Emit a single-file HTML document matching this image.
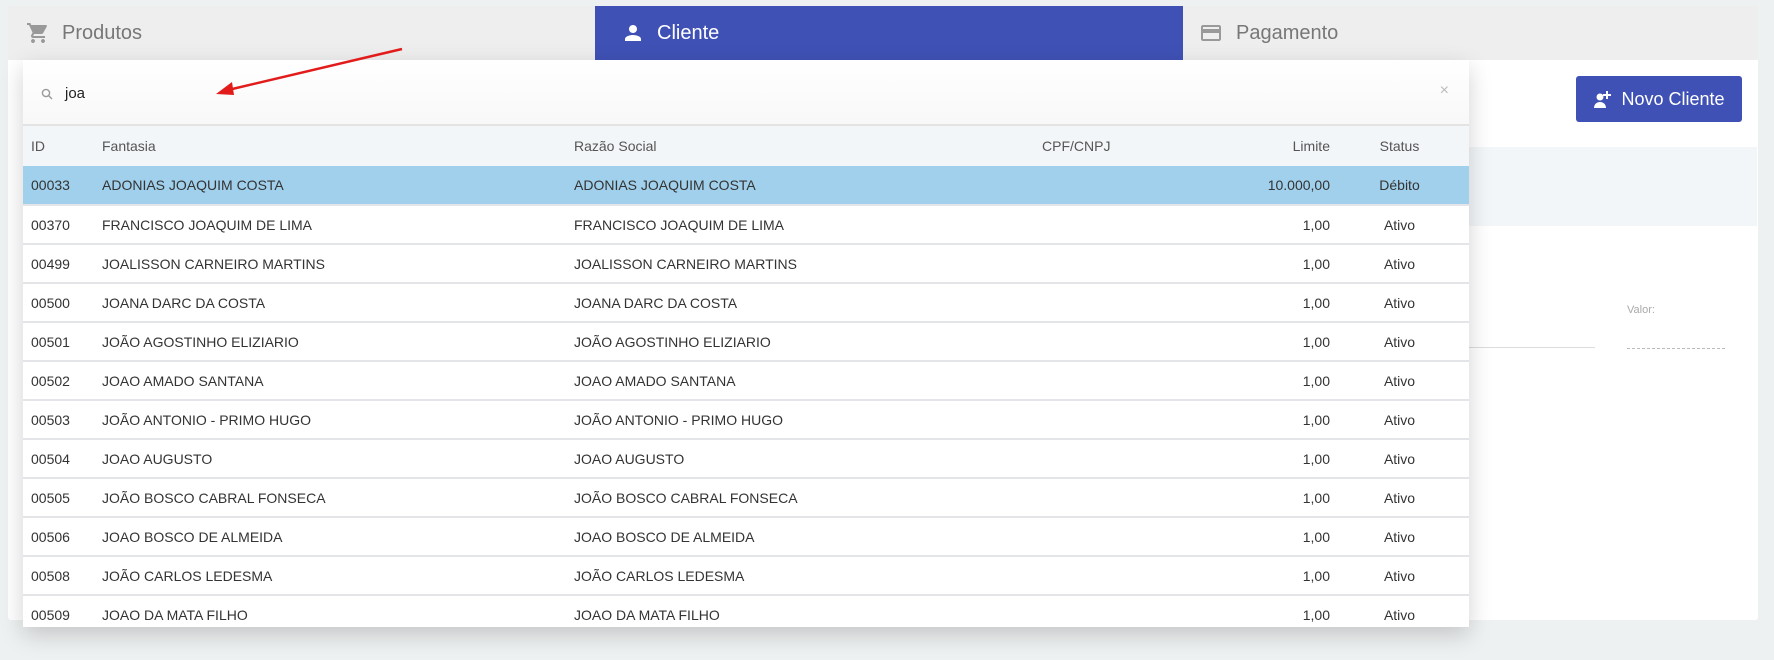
<!DOCTYPE html>
<html><head><meta charset="utf-8"><style>
*{box-sizing:border-box;margin:0;padding:0}
body{width:1774px;height:660px;background:#eef1f2;font-family:"Liberation Sans",sans-serif;position:relative;overflow:hidden;color:#333}
.tabs{position:absolute;left:8px;top:6px;width:1750px;height:54px;background:#eeeeee}
.tab{position:absolute;top:0;height:54px;display:flex;align-items:center;font-size:20px;color:#777}
.panel{position:absolute;left:8px;top:60px;width:1750px;height:560px;background:#fff;border-radius:0 0 3px 3px}
.dd{position:absolute;left:23px;top:60px;width:1446px;height:567px;background:#fff;box-shadow:0 8px 22px rgba(0,0,0,.18);overflow:hidden}
.search{height:66px;position:relative;background:linear-gradient(#fff,#f8f8f8);border-bottom:2px solid #e3e3e3}
table{border-collapse:collapse;width:100%;font-size:14px}
th{height:40px;background:#f3f6f8;font-weight:normal;color:#555;text-align:left}
td{height:39px;border-top:2px solid #e3e5e8;color:#333}
tr.sel td{background:#a0d0ec;border-top:none}
.r{text-align:right}.c{text-align:center}
</style></head><body>
<div class="tabs">
 <div class="tab" style="left:18px"><svg width="24" height="24" viewBox="0 0 24 24" fill="#999"><path d="M7 18c-1.1 0-2 .9-2 2s.9 2 2 2 2-.9 2-2-.9-2-2-2zM1 2v2h2l3.6 7.6-1.4 2.4c-.1.3-.2.6-.2 1 0 1.1.9 2 2 2h12v-2H7.4c-.1 0-.2-.1-.2-.2v-.1l.9-1.7h7.4c.8 0 1.4-.4 1.7-1l3.6-6.5c.1-.2.1-.3.1-.5 0-.6-.4-1-1-1H5.2L4.3 2H1zm16 16c-1.1 0-2 .9-2 2s.9 2 2 2 2-.9 2-2-.9-2-2-2z"/></svg><span style="margin-left:12px">Produtos</span></div>
 <div class="tab" style="left:587px;width:588px;background:#3f51b5;color:#fff;padding-left:26px"><svg width="24" height="24" viewBox="0 0 24 24" fill="#fff"><path d="M12 12c2.2 0 4-1.8 4-4s-1.8-4-4-4-4 1.8-4 4 1.8 4 4 4zm0 2c-2.7 0-8 1.3-8 4v2h16v-2c0-2.7-5.3-4-8-4z"/></svg><span style="margin-left:12px">Cliente</span></div>
 <div class="tab" style="left:1190px"><svg width="26" height="24" viewBox="0 0 24 24" fill="#999"><path d="M20 4H4c-1.1 0-2 .9-2 2v12c0 1.1.9 2 2 2h16c1.1 0 2-.9 2-2V6c0-1.1-.9-2-2-2zm0 14H4v-6h16v6zm0-10H4V6h16v2z"/></svg><span style="margin-left:12px">Pagamento</span></div>
</div>
<div class="panel"></div>
<div style="position:absolute;left:1576px;top:76px;width:166px;height:46px;background:#3f51b5;border-radius:3px;color:#fff;font-size:18px;display:flex;align-items:center;justify-content:center"><svg width="22" height="20" viewBox="0 0 22 20" fill="#fff"><circle cx="7" cy="8" r="3.5"/><path d="M1 19c0-4 3-6 6-6s6 2 6 6z"/><path d="M13 2h2v3h3v2h-3v3h-2V7h-3V5h3z"/></svg><span style="margin-left:6px">Novo Cliente</span></div>
<div style="position:absolute;left:1469px;top:147px;width:288px;height:79px;background:#f3f6f8"></div>
<div style="position:absolute;left:1627px;top:304px;font-size:11px;color:#aaa">Valor:</div>
<div style="position:absolute;left:1469px;top:347px;width:126px;border-top:1px solid #ddd"></div>
<div style="position:absolute;left:1627px;top:348px;width:98px;border-top:1px dashed #bbb"></div>
<div class="dd">
 <div class="search"><svg style="position:absolute;left:18px;top:28px" width="12" height="12" viewBox="0 0 12 12" fill="none" stroke="#999" stroke-width="1.4"><circle cx="5" cy="5" r="3.6"/><path d="M7.6 7.6L11 11"/></svg><span style="position:absolute;left:42px;top:25px;font-size:15px;color:#222">joa</span><span style="position:absolute;right:20px;top:22px;font-size:16px;color:#bbb">×</span></div>
 <table>
 <colgroup><col style="width:79px"><col style="width:472px"><col style="width:466px"><col style="width:190px"><col style="width:100px"><col style="width:139px"></colgroup>
 <tr><th style="padding-left:8px">ID</th><th>Fantasia</th><th>Razão Social</th><th style="padding-left:2px">CPF/CNPJ</th><th class="r">Limite</th><th class="c">Status</th></tr>
 <tr class="sel"><td style="padding-left:8px">00033</td><td>ADONIAS JOAQUIM COSTA</td><td>ADONIAS JOAQUIM COSTA</td><td></td><td class="r">10.000,00</td><td class="c">Débito</td></tr>
 <tr><td style="padding-left:8px">00370</td><td>FRANCISCO JOAQUIM DE LIMA</td><td>FRANCISCO JOAQUIM DE LIMA</td><td></td><td class="r">1,00</td><td class="c">Ativo</td></tr>
 <tr><td style="padding-left:8px">00499</td><td>JOALISSON CARNEIRO MARTINS</td><td>JOALISSON CARNEIRO MARTINS</td><td></td><td class="r">1,00</td><td class="c">Ativo</td></tr>
 <tr><td style="padding-left:8px">00500</td><td>JOANA DARC DA COSTA</td><td>JOANA DARC DA COSTA</td><td></td><td class="r">1,00</td><td class="c">Ativo</td></tr>
 <tr><td style="padding-left:8px">00501</td><td>JOÃO AGOSTINHO ELIZIARIO</td><td>JOÃO AGOSTINHO ELIZIARIO</td><td></td><td class="r">1,00</td><td class="c">Ativo</td></tr>
 <tr><td style="padding-left:8px">00502</td><td>JOAO AMADO SANTANA</td><td>JOAO AMADO SANTANA</td><td></td><td class="r">1,00</td><td class="c">Ativo</td></tr>
 <tr><td style="padding-left:8px">00503</td><td>JOÃO ANTONIO - PRIMO HUGO</td><td>JOÃO ANTONIO - PRIMO HUGO</td><td></td><td class="r">1,00</td><td class="c">Ativo</td></tr>
 <tr><td style="padding-left:8px">00504</td><td>JOAO AUGUSTO</td><td>JOAO AUGUSTO</td><td></td><td class="r">1,00</td><td class="c">Ativo</td></tr>
 <tr><td style="padding-left:8px">00505</td><td>JOÃO BOSCO CABRAL FONSECA</td><td>JOÃO BOSCO CABRAL FONSECA</td><td></td><td class="r">1,00</td><td class="c">Ativo</td></tr>
 <tr><td style="padding-left:8px">00506</td><td>JOAO BOSCO DE ALMEIDA</td><td>JOAO BOSCO DE ALMEIDA</td><td></td><td class="r">1,00</td><td class="c">Ativo</td></tr>
 <tr><td style="padding-left:8px">00508</td><td>JOÃO CARLOS LEDESMA</td><td>JOÃO CARLOS LEDESMA</td><td></td><td class="r">1,00</td><td class="c">Ativo</td></tr>
 <tr><td style="padding-left:8px">00509</td><td>JOAO DA MATA FILHO</td><td>JOAO DA MATA FILHO</td><td></td><td class="r">1,00</td><td class="c">Ativo</td></tr>
 </table>
</div>
<svg style="position:absolute;left:0;top:0" width="1774" height="660"><line x1="402" y1="49" x2="228" y2="90" stroke="#e21b1b" stroke-width="2.5"/><path d="M216 94L232 82L234 95Z" fill="#e21b1b"/></svg>
</body></html>
